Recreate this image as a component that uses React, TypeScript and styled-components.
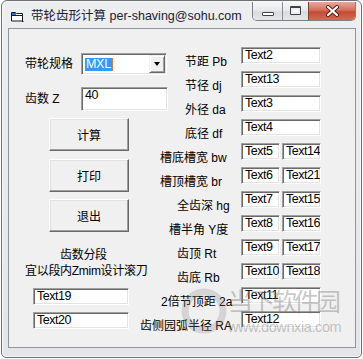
import React from "react";
import styled, { createGlobalStyle } from "styled-components";

// 带轮齿形计算 – VB 小程序窗口 (Win7 basic 外框)

const GlobalStyle = createGlobalStyle`
  html, body {
    margin: 0;
    padding: 0;
    background: #ffffff;
  }
  body {
    font-family: "Liberation Sans", "Noto Sans CJK SC", sans-serif;
    font-size: 12px;
    color: #000;
  }
`;

const Window = styled.div`
  box-sizing: border-box;
  width: 361px;
  height: 358px;
  margin: 0 1px;
  padding: 0 5px 9px 6px;
  display: flex;
  flex-direction: column;
  border: 1px solid #6e7073;
  border-radius: 6px 6px 5px 5px;
  background: linear-gradient(#eceef0, #e3e5e8);
  box-shadow: inset 0 0 0 1px #f7f7f8;
`;

const TitleBar = styled.div`
  height: 27px;
  display: flex;
  align-items: center;
  padding-left: 3px;
`;

const TitleIcon = styled.svg`
  flex: none;
  margin-top: 3px;
`;

const TitleText = styled.span`
  margin-left: 7px;
  font-size: 12.5px;
  color: #1a2133;
  white-space: nowrap;
`;

const CaptionGroup = styled.div`
  margin-left: auto;
  align-self: flex-start;
  margin-top: 1px;
  display: flex;
  height: 18px;
  border: 1px solid #7c7f84;
  border-top: none;
  border-radius: 0 0 5px 5px;
  overflow: hidden;
`;

const CaptionButton = styled.div<{ $width: number; $close?: boolean }>`
  box-sizing: border-box;
  width: ${(p) => p.$width}px;
  display: flex;
  align-items: center;
  justify-content: center;
  border-left: ${(p) => (p.$close ? "1px solid #8a3a30" : "1px solid #8a8d92")};
  background: ${(p) =>
    p.$close
      ? "linear-gradient(#e9a79b 0%, #d4705e 45%, #c44a35 55%, #d36b4f 100%)"
      : "linear-gradient(#f7f7f8 0%, #e9eaec 45%, #d9dbde 55%, #e4e6e8 100%)"};
  &:first-child {
    border-left: none;
  }
`;

const MinGlyph = styled.div`
  box-sizing: border-box;
  width: 12px;
  height: 4px;
  margin-top: 6px;
  border: 1px solid #3f4246;
  border-radius: 1px;
  background: #fff;
`;

const MaxGlyph = styled.div`
  box-sizing: border-box;
  width: 11px;
  height: 9px;
  margin-top: -1px;
  border: 1px solid #3f4246;
  border-top-width: 2px;
  border-radius: 1px;
  background: #fff;
  box-shadow: inset 0 0 0 2px #eceef0;
`;

const Client = styled.div`
  flex: 1;
  position: relative;
  display: grid;
  grid-template-columns: 131px 1fr;
  border: 1px solid #8f959c;
  background: #f0f0f0;
  overflow: hidden;
`;

const LeftPane = styled.div`
  display: flex;
  flex-direction: column;
  align-items: flex-start;
  padding-top: 24px;
`;

const FieldRow = styled.div<{ $top?: number }>`
  display: grid;
  grid-template-columns: 56px auto;
  align-items: center;
  margin: ${(p) => p.$top ?? 0}px 0 0 16px;
`;

const Label = styled.span<{ $indent?: number }>`
  display: block;
  padding-left: ${(p) => p.$indent ?? 0}px;
  line-height: 15px;
  white-space: nowrap;
`;

const Sunken = styled.div<{ $width: number; $height: number }>`
  box-sizing: border-box;
  width: ${(p) => p.$width}px;
  height: ${(p) => p.$height}px;
  border: 1px solid;
  border-color: #a0a0a0 #ffffff #ffffff #a0a0a0;
  box-shadow: inset 1px 1px 0 #696969, inset -1px -1px 0 #e3e3e3;
  background: #ffffff;
`;

const TextBox = styled(Sunken)`
  padding: 1px 0 0 3px;
  font-size: 12.5px;
  line-height: 13px;
  letter-spacing: -0.5px;
  white-space: nowrap;
  overflow: hidden;
`;

const Combo = styled(Sunken)`
  display: flex;
  align-items: stretch;
  justify-content: space-between;
  padding: 1px;
`;

const ComboValue = styled.div`
  display: flex;
  align-items: center;
  padding-left: 2px;
`;

const Selected = styled.span`
  background: #3399ff;
  color: #ffffff;
  font-size: 12.5px;
  line-height: 13px;
  padding: 0 1px;
  letter-spacing: -0.3px;
`;

const Caret = styled.span`
  width: 1px;
  height: 13px;
  background: #e0782a;
`;

const DropButton = styled.div`
  box-sizing: border-box;
  width: 16px;
  display: flex;
  align-items: center;
  justify-content: center;
  background: #f0f0f0;
  border: 1px solid;
  border-color: #f0f0f0 #696969 #696969 #f0f0f0;
  box-shadow: inset 1px 1px 0 #ffffff, inset -1px -1px 0 #a0a0a0;
`;

const Arrow = styled.span`
  width: 0;
  height: 0;
  border-left: 3.5px solid transparent;
  border-right: 3.5px solid transparent;
  border-top: 4px solid #000;
`;

const CommandButton = styled.button<{ $top: number }>`
  box-sizing: border-box;
  width: 80px;
  height: 33px;
  margin: ${(p) => p.$top}px 0 0 40px;
  padding: 0;
  font-family: "Liberation Sans", "Noto Sans CJK SC", sans-serif;
  font-size: 12px;
  color: #000;
  background: #f0f0f0;
  border: 1px solid;
  border-color: #ffffff #696969 #696969 #ffffff;
  box-shadow: inset -1px -1px 0 #a0a0a0, inset 1px 1px 0 #e3e3e3;
`;

const Note = styled.span<{ $top: number; $left: number }>`
  margin: ${(p) => p.$top}px 0 0 ${(p) => p.$left}px;
  line-height: 14px;
  white-space: nowrap;
  letter-spacing: -0.3px;
`;

const SideBox = styled(TextBox)<{ $top: number }>`
  margin: ${(p) => p.$top}px 0 0 24px;
`;

const RightPane = styled.div`
  display: flex;
  flex-direction: column;
  padding-top: 18px;
`;

const ResultRow = styled.div`
  height: 24px;
  display: grid;
  grid-template-columns: 101px auto;
  align-items: start;
`;

const RowLabel = styled(Label)`
  padding-top: 8px;
`;

const BoxPair = styled.div`
  display: flex;
  gap: 2px;
`;

const Watermark = styled.div`
  position: absolute;
  left: 171px;
  top: 256px;
  pointer-events: none;
  display: flex;
  align-items: flex-start;
`;

const WatermarkText = styled.div`
  display: flex;
  flex-direction: column;
  color: rgba(120, 120, 120, 0.42);
`;

const WatermarkTitle = styled.span`
  font-family: "Noto Sans CJK SC", sans-serif;
  font-size: 25px;
  line-height: 31px;
  letter-spacing: -3px;
`;

const WatermarkUrl = styled.span`
  margin-top: 3px;
  font-size: 14.5px;
  line-height: 16px;
  letter-spacing: -0.4px;
`;

type Row = { label: string; indent: number; boxes: string[] };

const rows: Row[] = [
  { label: "节距 Pb", indent: 45, boxes: ["Text2"] },
  { label: "节径 dj", indent: 45, boxes: ["Text13"] },
  { label: "外径 da", indent: 45, boxes: ["Text3"] },
  { label: "底径 df", indent: 45, boxes: ["Text4"] },
  { label: "槽底槽宽 bw", indent: 20, boxes: ["Text5", "Text14"] },
  { label: "槽顶槽宽 br", indent: 20, boxes: ["Text6", "Text21"] },
  { label: "全齿深 hg", indent: 37, boxes: ["Text7", "Text15"] },
  { label: "槽半角 Y度", indent: 29, boxes: ["Text8", "Text16"] },
  { label: "齿顶 Rt", indent: 37, boxes: ["Text9", "Text17"] },
  { label: "齿底 Rb", indent: 37, boxes: ["Text10", "Text18"] },
  { label: "2倍节顶距 2a", indent: 21, boxes: ["Text11"] },
  { label: "齿侧园弧半径 RA", indent: 0, boxes: ["Text12"] },
];

export default function App() {
  return (
    <>
      <GlobalStyle />
      <Window>
        <TitleBar>
          <TitleIcon width="13" height="11" viewBox="0 0 13 11">
            <path d="M0.5 1.5h4l1 1h6v7.5h-11z" fill="#ffffff" stroke="#1a1a1a" />
            <rect x="1" y="2" width="4" height="2" fill="#2b6fd8" />
            <rect x="1" y="4" width="10" height="1" fill="#1a1a1a" />
            <path d="M11 10.5h1.5" stroke="#1a1a1a" />
          </TitleIcon>
          <TitleText>带轮齿形计算 per-shaving@sohu.com</TitleText>
          <CaptionGroup>
            <CaptionButton $width={29}>
              <MinGlyph />
            </CaptionButton>
            <CaptionButton $width={26}>
              <MaxGlyph />
            </CaptionButton>
            <CaptionButton $width={47} $close>
              <svg width="15" height="12" viewBox="0 0 15 12">
                <path d="M3 2L12 10M12 2L3 10" stroke="#5b1d14" strokeWidth="4" strokeLinecap="round" />
                <path d="M3 2L12 10M12 2L3 10" stroke="#ffffff" strokeWidth="2.2" strokeLinecap="round" />
              </svg>
            </CaptionButton>
          </CaptionGroup>
        </TitleBar>

        <Client>
          <LeftPane>
            <FieldRow>
              <Label>带轮规格</Label>
              <Combo $width={86} $height={22}>
                <ComboValue>
                  <Selected>MXL</Selected>
                  <Caret />
                </ComboValue>
                <DropButton>
                  <Arrow />
                </DropButton>
              </Combo>
            </FieldRow>
            <FieldRow $top={12}>
              <Label>齿数 Z</Label>
              <TextBox $width={87} $height={24}>40</TextBox>
            </FieldRow>
            <CommandButton $top={7}>计算</CommandButton>
            <CommandButton $top={8}>打印</CommandButton>
            <CommandButton $top={7}>退出</CommandButton>
            <Note $top={16} $left={51}>齿数分段</Note>
            <Note $top={2} $left={16}>宜以段内Zmim设计滚刀</Note>
            <SideBox $top={10} $width={96} $height={17}>Text19</SideBox>
            <SideBox $top={7} $width={96} $height={17}>Text20</SideBox>
          </LeftPane>

          <RightPane>
            {rows.map((row) => (
              <ResultRow key={row.label}>
                <RowLabel $indent={row.indent}>{row.label}</RowLabel>
                {row.boxes.length === 1 ? (
                  <TextBox $width={80} $height={17}>{row.boxes[0]}</TextBox>
                ) : (
                  <BoxPair>
                    {row.boxes.map((b) => (
                      <TextBox key={b} $width={39} $height={17}>{b}</TextBox>
                    ))}
                  </BoxPair>
                )}
              </ResultRow>
            ))}
          </RightPane>

          <Watermark>
            <svg width="48" height="52" viewBox="0 0 48 52">
              <circle cx="24" cy="26" r="19" fill="none" stroke="rgba(130,130,130,0.26)" strokeWidth="7" />
            </svg>
            <WatermarkText>
              <WatermarkTitle>当下软件园</WatermarkTitle>
              <WatermarkUrl>www.downxia.com</WatermarkUrl>
            </WatermarkText>
          </Watermark>
        </Client>
      </Window>
    </>
  );
}
